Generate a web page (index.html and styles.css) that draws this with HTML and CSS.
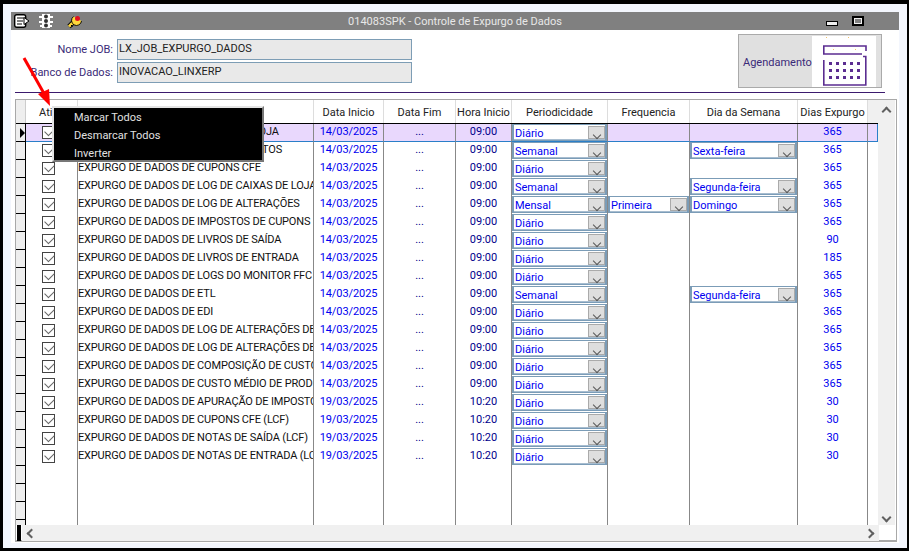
FILE: index.html
```html
<!DOCTYPE html>
<html lang="pt">
<head>
<meta charset="utf-8">
<title>Controle de Expurgo de Dados</title>
<link rel="stylesheet" href="styles.css">
</head>
<body>
<svg class="arrow" width="60" height="60" viewBox="0 0 60 60"><path d="M3 2 L25 41" stroke="#f00" stroke-width="3" fill="none"/><path d="M29 50 L17 38 L28 33 Z" fill="#f00"/></svg>
<div class="window">
  <div class="titlebar">
    <div class="tools">
      <svg width="16" height="14" viewBox="0 0 16 14"><rect x="0.7" y="0.7" width="11" height="12.6" rx="2" fill="#fff" stroke="#000" stroke-width="1.4"/><path d="M3 4h7M3 7h6M3 10h5" stroke="#000"/><path d="M10 3.5l5 3.5-5 3.5z" fill="#fff" stroke="#000"/></svg>
      <svg width="16" height="16" viewBox="0 0 16 16"><path d="M4 1h8v14H4z" fill="#fff"/><circle cx="8" cy="3.5" r="2" fill="#333"/><circle cx="8" cy="8" r="2" fill="#333"/><circle cx="8" cy="12.5" r="2" fill="#333"/><path d="M1 3h3v2H1zM12 3h3v2h-3zM1 8h3v2H1zM12 8h3v2h-3zM2 12h2v2H2zM12 12h2v2h-2z" fill="#fff"/></svg>
      <svg class="tool-key" width="16" height="15" viewBox="0 0 16 15"><path d="M2 12.5l6-6" stroke="#000" stroke-width="4.600"/><path d="M2 12.5l6-6" stroke="#ffd83a" stroke-width="2.800"/><path d="M4 11l1.500 1.500" stroke="#000"/><path d="M6.500 2.500A5 5 0 1 0 14.500 7" fill="#ffd83a" stroke="#000" stroke-width=".9"/><circle cx="10.500" cy="4.400" r="2.500" fill="#e01020"/></svg>
    </div>
    <div class="title">014083SPK - Controle de Expurgo de Dados</div>
    <div class="controls">
      <span class="btn-min"></span>
      <span class="btn-max"></span>
    </div>
  </div>

  <div class="top">
    <div class="fields">
      <label class="lbl">Nome JOB:</label><div class="input">LX_JOB_EXPURGO_DADOS</div>
      <label class="lbl">Banco de Dados:</label><div class="input">INOVACAO_LINXERP</div>
    </div>
    <div class="panel">
      <span class="panel-text">Agendamento</span>
      <div class="panel-icon">
        <svg width="64" height="51" viewBox="0 0 64 51"><path d="M54 15V10H11.800V18H50" fill="none" stroke="#5b2d91" stroke-width="1.6"/><path d="M51 20.500H53.800V49H11.800V24" fill="none" stroke="#5b2d91" stroke-width="1.6"/><g fill="#5b2d91"><rect x="17" y="26" width="3" height="3"/><rect x="24" y="26" width="3" height="3"/><rect x="31" y="26" width="3" height="3"/><rect x="38" y="26" width="3" height="3"/><rect x="45" y="26" width="3" height="3"/><rect x="17" y="33" width="3" height="3"/><rect x="24" y="33" width="3" height="3"/><rect x="31" y="33" width="3" height="3"/><rect x="38" y="33" width="3" height="3"/><rect x="45" y="33" width="3" height="3"/><rect x="17" y="40" width="3" height="3"/><rect x="24" y="40" width="3" height="3"/><rect x="31" y="40" width="3" height="3"/><rect x="38" y="40" width="3" height="3"/><rect x="45" y="40" width="3" height="3"/></g><g fill="#f2c36a"><rect x="14" y="1" width="1" height="1"/><rect x="36" y="1" width="1" height="1"/><rect x="21" y="13" width="1" height="1"/><rect x="43" y="13" width="1" height="1"/></g></svg>
      </div>
    </div>
  </div>
  <div class="rule"></div>

  <div class="frame">
    <div class="frame-main">
      <div class="table">
        <div class="row head">
          <div class="sel"></div>
          <div class="c">Ativo</div>
          <div class="c"></div>
          <div class="c">Data Inicio</div>
          <div class="c">Data Fim</div>
          <div class="c">Hora Inicio</div>
          <div class="c">Periodicidade</div>
          <div class="c">Frequencia</div>
          <div class="c">Dia da Semana</div>
          <div class="c">Dias Expurgo</div>
          <div class="filler"></div>
        </div>
        <div class="body">
          <div class="row current"><div class="sel"><span class="pointer"></span></div><div class="c chk"><span class="box"></span></div><div class="c txt">EXPURGO DE DADOS DE CAIXAS DA LOJA</div><div class="c blue">14/03/2025</div><div class="c dots">...</div><div class="c navy">09:00</div><div class="c cb"><div class="dd">Diário<i></i></div></div><div class="c"></div><div class="c"></div><div class="c blue">365</div></div>
          <div class="row"><div class="sel"></div><div class="c chk"><span class="box"></span></div><div class="c txt">EXPURGO DE DADOS DE LOG DE EVENTOS</div><div class="c blue">14/03/2025</div><div class="c dots">...</div><div class="c navy">09:00</div><div class="c cb"><div class="dd">Semanal<i></i></div></div><div class="c"></div><div class="c cb"><div class="dd">Sexta-feira<i></i></div></div><div class="c blue">365</div></div>
          <div class="row"><div class="sel"></div><div class="c chk"><span class="box"></span></div><div class="c txt">EXPURGO DE DADOS DE CUPONS CFE</div><div class="c blue">14/03/2025</div><div class="c dots">...</div><div class="c navy">09:00</div><div class="c cb"><div class="dd">Diário<i></i></div></div><div class="c"></div><div class="c"></div><div class="c blue">365</div></div>
          <div class="row"><div class="sel"></div><div class="c chk"><span class="box"></span></div><div class="c txt">EXPURGO DE DADOS DE LOG DE CAIXAS DE LOJA</div><div class="c blue">14/03/2025</div><div class="c dots">...</div><div class="c navy">09:00</div><div class="c cb"><div class="dd">Semanal<i></i></div></div><div class="c"></div><div class="c cb"><div class="dd">Segunda-feira<i></i></div></div><div class="c blue">365</div></div>
          <div class="row"><div class="sel"></div><div class="c chk"><span class="box"></span></div><div class="c txt">EXPURGO DE DADOS DE LOG DE ALTERAÇÕES</div><div class="c blue">14/03/2025</div><div class="c dots">...</div><div class="c navy">09:00</div><div class="c cb"><div class="dd">Mensal<i></i></div></div><div class="c cb"><div class="dd">Primeira<i></i></div></div><div class="c cb"><div class="dd">Domingo<i></i></div></div><div class="c blue">365</div></div>
          <div class="row"><div class="sel"></div><div class="c chk"><span class="box"></span></div><div class="c txt">EXPURGO DE DADOS DE IMPOSTOS DE CUPONS</div><div class="c blue">14/03/2025</div><div class="c dots">...</div><div class="c navy">09:00</div><div class="c cb"><div class="dd">Diário<i></i></div></div><div class="c"></div><div class="c"></div><div class="c blue">365</div></div>
          <div class="row"><div class="sel"></div><div class="c chk"><span class="box"></span></div><div class="c txt">EXPURGO DE DADOS DE LIVROS DE SAÍDA</div><div class="c blue">14/03/2025</div><div class="c dots">...</div><div class="c navy">09:00</div><div class="c cb"><div class="dd">Diário<i></i></div></div><div class="c"></div><div class="c"></div><div class="c blue">90</div></div>
          <div class="row"><div class="sel"></div><div class="c chk"><span class="box"></span></div><div class="c txt">EXPURGO DE DADOS DE LIVROS DE ENTRADA</div><div class="c blue">14/03/2025</div><div class="c dots">...</div><div class="c navy">09:00</div><div class="c cb"><div class="dd">Diário<i></i></div></div><div class="c"></div><div class="c"></div><div class="c blue">185</div></div>
          <div class="row"><div class="sel"></div><div class="c chk"><span class="box"></span></div><div class="c txt">EXPURGO DE DADOS DE LOGS DO MONITOR FFC</div><div class="c blue">14/03/2025</div><div class="c dots">...</div><div class="c navy">09:00</div><div class="c cb"><div class="dd">Diário<i></i></div></div><div class="c"></div><div class="c"></div><div class="c blue">365</div></div>
          <div class="row"><div class="sel"></div><div class="c chk"><span class="box"></span></div><div class="c txt">EXPURGO DE DADOS DE ETL</div><div class="c blue">14/03/2025</div><div class="c dots">...</div><div class="c navy">09:00</div><div class="c cb"><div class="dd">Semanal<i></i></div></div><div class="c"></div><div class="c cb"><div class="dd">Segunda-feira<i></i></div></div><div class="c blue">365</div></div>
          <div class="row"><div class="sel"></div><div class="c chk"><span class="box"></span></div><div class="c txt">EXPURGO DE DADOS DE EDI</div><div class="c blue">14/03/2025</div><div class="c dots">...</div><div class="c navy">09:00</div><div class="c cb"><div class="dd">Diário<i></i></div></div><div class="c"></div><div class="c"></div><div class="c blue">365</div></div>
          <div class="row"><div class="sel"></div><div class="c chk"><span class="box"></span></div><div class="c txt">EXPURGO DE DADOS DE LOG DE ALTERAÇÕES DE</div><div class="c blue">14/03/2025</div><div class="c dots">...</div><div class="c navy">09:00</div><div class="c cb"><div class="dd">Diário<i></i></div></div><div class="c"></div><div class="c"></div><div class="c blue">365</div></div>
          <div class="row"><div class="sel"></div><div class="c chk"><span class="box"></span></div><div class="c txt">EXPURGO DE DADOS DE LOG DE ALTERAÇÕES DE</div><div class="c blue">14/03/2025</div><div class="c dots">...</div><div class="c navy">09:00</div><div class="c cb"><div class="dd">Diário<i></i></div></div><div class="c"></div><div class="c"></div><div class="c blue">365</div></div>
          <div class="row"><div class="sel"></div><div class="c chk"><span class="box"></span></div><div class="c txt">EXPURGO DE DADOS DE COMPOSIÇÃO DE CUSTO</div><div class="c blue">14/03/2025</div><div class="c dots">...</div><div class="c navy">09:00</div><div class="c cb"><div class="dd">Diário<i></i></div></div><div class="c"></div><div class="c"></div><div class="c blue">365</div></div>
          <div class="row"><div class="sel"></div><div class="c chk"><span class="box"></span></div><div class="c txt">EXPURGO DE DADOS DE CUSTO MÉDIO DE PROD</div><div class="c blue">14/03/2025</div><div class="c dots">...</div><div class="c navy">09:00</div><div class="c cb"><div class="dd">Diário<i></i></div></div><div class="c"></div><div class="c"></div><div class="c blue">365</div></div>
          <div class="row"><div class="sel"></div><div class="c chk"><span class="box"></span></div><div class="c txt">EXPURGO DE DADOS DE APURAÇÃO DE IMPOSTO</div><div class="c blue">19/03/2025</div><div class="c dots">...</div><div class="c navy">10:20</div><div class="c cb"><div class="dd">Diário<i></i></div></div><div class="c"></div><div class="c"></div><div class="c blue">30</div></div>
          <div class="row"><div class="sel"></div><div class="c chk"><span class="box"></span></div><div class="c txt">EXPURGO DE DADOS DE CUPONS CFE (LCF)</div><div class="c blue">19/03/2025</div><div class="c dots">...</div><div class="c navy">10:20</div><div class="c cb"><div class="dd">Diário<i></i></div></div><div class="c"></div><div class="c"></div><div class="c blue">30</div></div>
          <div class="row"><div class="sel"></div><div class="c chk"><span class="box"></span></div><div class="c txt">EXPURGO DE DADOS DE NOTAS DE SAÍDA (LCF)</div><div class="c blue">19/03/2025</div><div class="c dots">...</div><div class="c navy">10:20</div><div class="c cb"><div class="dd">Diário<i></i></div></div><div class="c"></div><div class="c"></div><div class="c blue">30</div></div>
          <div class="row"><div class="sel"></div><div class="c chk"><span class="box"></span></div><div class="c txt">EXPURGO DE DADOS DE NOTAS DE ENTRADA (LCF)</div><div class="c blue">19/03/2025</div><div class="c dots">...</div><div class="c navy">10:20</div><div class="c cb"><div class="dd">Diário<i></i></div></div><div class="c"></div><div class="c"></div><div class="c blue">30</div></div>
          <div class="row"><div class="sel"></div><div class="c"></div><div class="c"></div><div class="c"></div><div class="c"></div><div class="c"></div><div class="c"></div><div class="c"></div><div class="c"></div><div class="c"></div></div>
          <div class="row"><div class="sel"></div><div class="c"></div><div class="c"></div><div class="c"></div><div class="c"></div><div class="c"></div><div class="c"></div><div class="c"></div><div class="c"></div><div class="c"></div></div>
          <div class="row"><div class="sel"></div><div class="c"></div><div class="c"></div><div class="c"></div><div class="c"></div><div class="c"></div><div class="c"></div><div class="c"></div><div class="c"></div><div class="c"></div></div>
          <div class="row"><div class="sel"></div><div class="c"></div><div class="c"></div><div class="c"></div><div class="c"></div><div class="c"></div><div class="c"></div><div class="c"></div><div class="c"></div><div class="c"></div></div>
        </div>
      </div>
      <div class="vbar"><span class="chev up"></span><span class="chev down"></span></div>
    </div>
    <div class="hbar"><span class="thumb"></span><span class="chev left"></span><span class="chev right"></span></div>
  </div>
</div>
<div class="menu">
  <div class="item">Marcar Todos</div>
  <div class="item">Desmarcar Todos</div>
  <div class="item">Inverter</div>
</div>
</body>
</html>
```
FILE: styles.css
```css
* { box-sizing: border-box; }
html, body { height: 100%; }
body {
  margin: 0;
  background: #000;
  font: 11px/16px Roboto, sans-serif;
  color: #111;
  overflow: hidden;
  padding: 4px 2px 3px 3px;
}
.window {
  height: 544px;
  background: #fff;
  border: solid #f3f6fd;
  border-width: 8px 8px 5px 8px;
  display: flex;
  flex-direction: column;
}
.titlebar {
  height: 18px;
  background: #808080;
  display: flex;
  align-items: center;
  flex: none;
}
.tools { width: 200px; display: flex; align-items: center; gap: 8px; padding-left: 3px; }
.tool-key { margin-left: 5px; }
.title { flex: 1; text-align: center; color: #e8e8e8; padding: 2px 60px 0 0; }
.controls { width: 140px; display: flex; align-items: center; justify-content: flex-end; gap: 14px; padding-right: 35px; }
.btn-min { width: 12px; height: 5px; margin-top: 4px; background: #f0f0f0; border: 1px solid #000; }
.btn-max { width: 12px; height: 10px; background: #808080; border: 2px solid #000; box-shadow: inset 0 0 0 1px #eee; }
.top {
  display: flex;
  justify-content: space-between;
  padding: 4px 17px 0 0;
  flex: none;
}
.fields {
  display: grid;
  grid-template-columns: 102px 295px;
  column-gap: 4px;
  row-gap: 2px;
  grid-auto-rows: 21px;
  padding-top: 5px;
  align-items: center;
}
.lbl { text-align: right; color: #3a2a78; }
.input {
  height: 21px;
  background: #e9e9e9;
  border: 1px solid #7d9db5;
  padding: 0 1px;
  color: #222;
  line-height: 17px;
}
.panel {
  width: 144px;
  height: 54px;
  background: #e0e0e0;
  border: 1px solid #aaa;
  display: flex;
  align-items: center;
  justify-content: space-between;
  padding: 1px 5px 1px 4px;
}
.panel-text { color: #3a2a78; padding-top: 3px; }
.panel-icon { width: 64px; height: 51px; background: #fff; }
.panel-icon svg { display: block; }
.rule { height: 1px; background: #3b1a6e; margin: 4px 14px 0 4px; flex: none; }
.frame {
  margin: 6px 2px 0 4px;
  height: 443px;
  border: 1px solid #a8a8a8;
  border-width: 1px 1px 2px 1px;
  display: flex;
  flex-direction: column;
  flex: none;
}
.frame-main { display: flex; height: 425px; flex: none; }
.table { width: 862px; flex: none; }
.row {
  display: grid;
  grid-template-columns: 10px 52px 236px 70px 72px 56px 96px 82px 108px 70px;
  height: 18px;
}
.head {
  height: 24px;
  grid-template-columns: 10px 52px 236px 70px 72px 56px 96px 82px 108px 70px 10px;
  border-bottom: 1px solid #000;
}
.head .c {
  border-right: 1px solid #ddd;
  text-align: center;
  line-height: 25px;
  color: #222;
}
.head .sel { background: #eee; border-right: 1px solid #ccc; border-bottom: 0; }
.filler { background: #f0f0f0; }
.body { height: 401px; overflow: hidden; }
.sel {
  background: #eee;
  border-right: 1px solid #000;
  border-bottom: 1px solid #000;
  display: flex;
  align-items: center;
  justify-content: flex-end;
}
.c {
  border-right: 1px solid #888;
  white-space: nowrap;
  overflow: hidden;
  line-height: 16px;
  text-align: center;
}
.txt { text-align: left; color: #111; letter-spacing: -0.17px; }
.blue { color: #0000f0; letter-spacing: -0.08px; }
.navy { color: #00008b; }
.dots { color: #00008b; }
.chk { display: flex; justify-content: center; align-items: flex-start; padding: 2px 6px 0 0; }
.box {
  width: 13px;
  height: 13px;
  border: 1px solid #444;
  background: #fff;
  position: relative;
}
.box::after {
  content: "";
  position: absolute;
  left: 2px;
  top: 1px;
  width: 8px;
  height: 5px;
  border: solid #666;
  border-width: 0 0 1.5px 1.5px;
  transform: rotate(-45deg);
}
.current {
  width: 862px;
  grid-template-columns: 10px 52px 236px 70px 72px 56px 96px 82px 108px 70px 10px;
}
.current .c { background: #e9d8fd; border-bottom: 1px solid #2a7fc8; }
.current::after { content: ""; background: #e9d8fd; border: solid #2a7fc8; border-width: 0 1px 1px 0; }
.current .sel { background: #eee; }
.current .cb { overflow: hidden; }
.pointer { border: solid transparent; border-width: 5px 0 5px 5px; border-left-color: #000; }
.dd {
  height: 17px;
  background: #fff;
  border: solid #7b9cb7;
  border-width: 1px 2px;
  box-shadow: inset 0 -1px 0 #a7bdd0;
  color: #0000f0;
  text-align: left;
  padding: 0 1px;
  line-height: 18px;
  position: relative;
}
.dd i {
  position: absolute;
  right: 0;
  top: 1px;
  width: 17px;
  height: 13px;
  background: #dedede;
  border: 1px solid #aaa;
}
.dd i::after {
  content: "";
  position: absolute;
  left: 5px;
  top: 5px;
  width: 5px;
  height: 5px;
  border: solid #555;
  border-width: 0 1px 1px 0;
  transform: rotate(45deg);
}
.vbar {
  width: 17px;
  background: #f0f0f0;
  display: flex;
  flex-direction: column;
  justify-content: space-between;
  align-items: center;
  padding: 8px 0 4px;
}
.hbar {
  height: 16px;
  margin-left: 6px;
  margin-right: 17px;
  background: #f0f0f0;
  display: flex;
  align-items: center;
  justify-content: space-between;
  padding-right: 6px;
  position: relative;
  flex: none;
}
.thumb { position: absolute; left: -5px; top: 0; width: 4px; height: 16px; background: #000; }
.chev { width: 7px; height: 7px; border: solid #606060; border-width: 2px 0 0 2px; display: block; }
.chev.up { transform: rotate(45deg); }
.chev.down { transform: rotate(225deg); }
.chev.left { transform: rotate(-45deg); margin-left: 6px; }
.chev.right { transform: rotate(135deg); }
.menu {
  position: absolute;
  left: 52px;
  top: 106px;
  width: 212px;
  height: 56px;
  background: #000;
  border: 2px solid #e4e4e4;
  border-right-color: #777;
  border-bottom-color: #777;
}
.item { height: 18px; line-height: 19px; padding-left: 20px; color: #e0e0e0; }
.arrow { position: absolute; left: 21px; top: 56px; z-index: 2; }
```
